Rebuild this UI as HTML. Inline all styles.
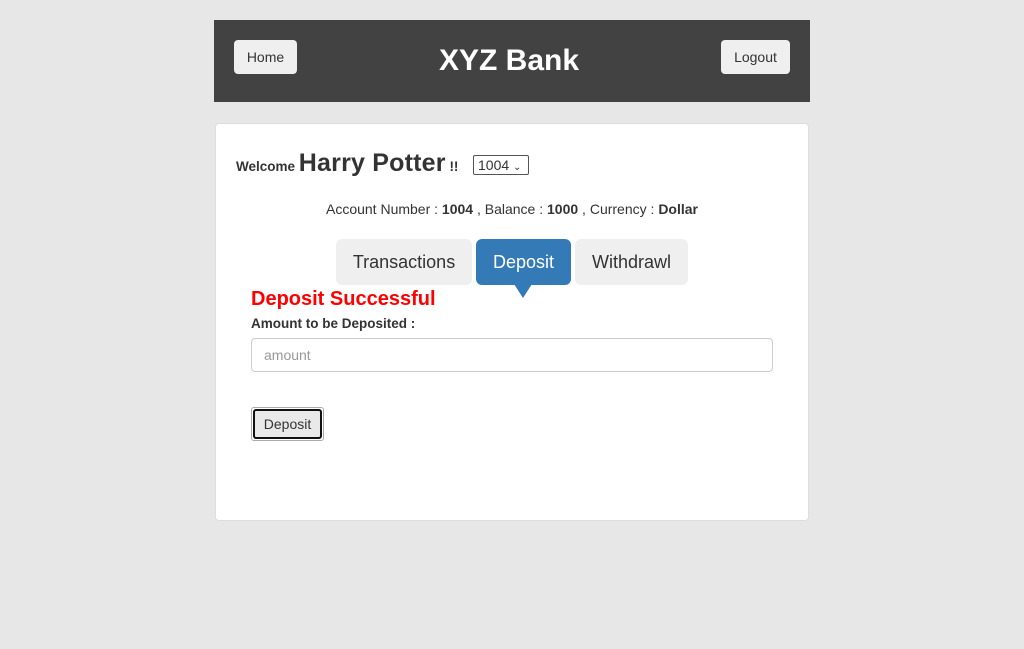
<!DOCTYPE html>
<html><head><style>
body{margin:0;background:#e7e7e7;font-family:"Liberation Sans",Arial,sans-serif;color:#333;width:1024px;height:649px;position:relative;overflow:hidden}
.a{position:absolute}
.hdr{left:214px;top:20px;width:596px;height:82px;background:#424242}
.btn{background:#efefef;border-radius:4px;font-size:14px;color:#333;text-align:center;line-height:34px;height:34px}
.card{left:215px;top:123px;width:592px;height:396px;background:#fff;border:1px solid #ddd;border-radius:4px}
.tab{top:239px;height:46px;line-height:46px;border-radius:6px;font-size:18px;text-align:center;background:#efefef;color:#333}
</style></head><body>
<div class="a hdr"></div>
<div class="a btn" style="left:234px;top:40px;width:63px">Home</div>
<div class="a btn" style="left:721px;top:40px;width:69px">Logout</div>
<div class="a" style="left:211px;width:596px;top:41px;text-align:center;color:#fff;font-weight:bold;font-size:30px;line-height:40px">XYZ Bank</div>
<div class="a card"></div>
<div class="a" style="left:236px;top:145px;font-weight:bold;font-size:13.5px;line-height:36px;white-space:nowrap">Welcome <span style="font-size:25px;letter-spacing:0.2px">Harry Potter</span> !!</div>
<div class="a" style="left:473px;top:155px;border:1px solid #555;border-radius:2px;font-size:14px;line-height:18px;padding-left:4px;box-sizing:border-box;width:56px;height:20px">1004 <span style="font-size:10px">&#8964;</span></div>
<div class="a" style="left:214px;width:596px;top:201px;text-align:center;font-size:14px">Account Number : <b>1004</b> , Balance : <b>1000</b> , Currency : <b>Dollar</b></div>
<div class="a tab" style="left:336px;width:136px">Transactions</div>
<div class="a tab" style="left:476px;width:95px;background:#337ab7;color:#fff">Deposit</div>
<div class="a" style="left:514px;top:284px;width:0;height:0;border-left:9px solid transparent;border-right:9px solid transparent;border-top:14px solid #337ab7"></div>
<div class="a tab" style="left:575px;width:113px">Withdrawl</div>
<div class="a" style="left:251px;top:288px;color:#f00;font-weight:bold;font-size:20px">Deposit Successful</div>
<div class="a" style="left:251px;top:316px;font-weight:bold;font-size:13.5px">Amount to be Deposited :</div>
<div class="a" style="left:251px;top:338px;width:522px;height:34px;border:1px solid #ccc;border-radius:4px;box-sizing:border-box;font-size:14px;color:#999;padding-left:12px;line-height:32px">amount</div>
<div class="a" style="left:251px;top:407px;width:73px;height:34px;border:1px solid #aaa;border-radius:3px;box-sizing:border-box;padding:1px"><div style="border:2px solid #111;border-radius:3px;background:#e9e9e9;height:26px;line-height:26px;text-align:center;font-size:14px">Deposit</div></div>
</body></html>
